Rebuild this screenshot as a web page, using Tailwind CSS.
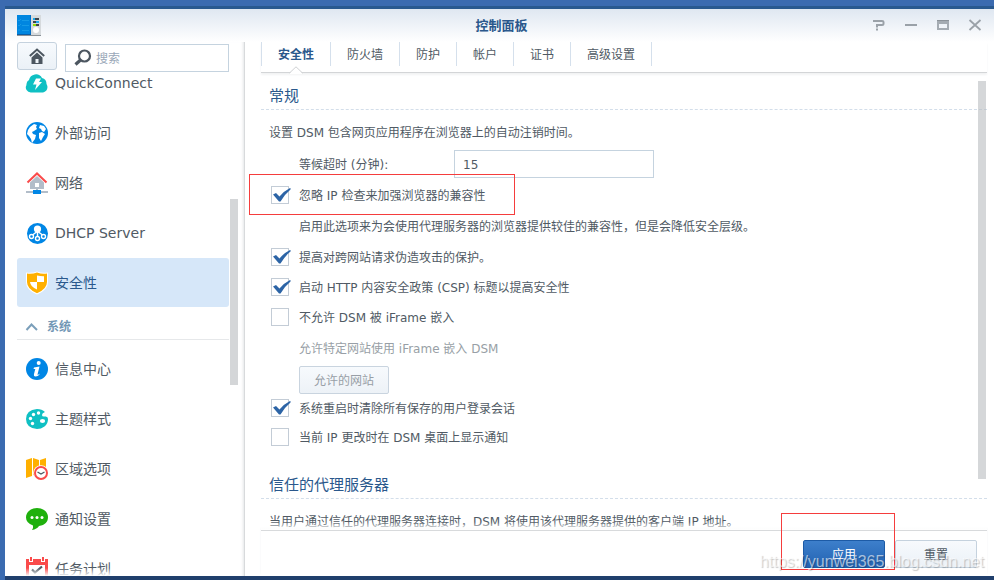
<!DOCTYPE html>
<html lang="zh-CN">
<head>
<meta charset="utf-8">
<meta name="viewport" content="width=device-width, initial-scale=1">
<title>控制面板</title>
<script src="https://cdn.jsdelivr.net/npm/@tailwindcss/browser@4"></script>
</head>
<body class="flex h-screen flex-col overflow-hidden bg-[#3b6bb0] font-['DejaVu_Sans','Noto_Sans_CJK_SC',sans-serif] text-xs text-[#505a64]">
<div class="ml-[5px] mt-1.5 h-[3px] shrink-0 bg-[#29598f]"></div>
<div class="relative ml-[5px] flex min-h-0 flex-1 flex-col bg-white">
  <header class="relative flex h-[33px] shrink-0 items-center justify-between bg-linear-to-b from-[#dfe7f1] to-white pl-3 pr-[11px]">
    <svg class="h-[22px] w-6" viewBox="0 0 24 22" aria-hidden="true">
      <rect x="0" y="0" width="14" height="20" fill="#0086e0"/><rect x="14" y="0" width="10" height="20" fill="#d6dadd"/>
      <path d="M0 19h14v1H0z" fill="#0a5ea8"/><path d="M0 20h24v1H0z" fill="#8b9298"/><path d="M13 0h1v19h-1z" fill="#0070c8"/>
      <path d="M1 5l1 1 2-2M1 10l1 1 2-2M1 15h2M5 5.500h7M5 10.500h7M5 15.500h7" fill="none" stroke="#1a9fe8" stroke-width=".8"/>
      <path d="M16 3h6v2h-6zM16 6h6v2h-6zM16 9h6v2h-6z" fill="#3c444c"/><path d="M16 3h2v2h-2zM19 6h3v2h-3z" fill="#19a9ee"/><path d="M16 9h3v2h-3z" fill="#8fdc00"/>
      <circle cx="19" cy="15" r="3" fill="#fff"/>
    </svg>
    <h1 class="absolute inset-x-0 h-8 pl-1 text-center text-[13px] leading-8 font-bold text-[#2a588c]">控制面板</h1>
    <div class="relative flex gap-4 pb-0.5">
      <button aria-label="帮助" class="size-4"><svg viewBox="0 0 16 16" fill="none" stroke="#9aa1a8" stroke-width="2"><path d="M2 4h9q1.500 0 1.500 1v1.500q0 1.500-1.500 1.500H6v2.500M5 12.500h2"/></svg></button>
      <button aria-label="最小化" class="size-4"><svg viewBox="0 0 16 16"><path d="M2 7h12v2H2z" fill="#9aa1a8"/></svg></button>
      <button aria-label="最大化" class="size-4"><svg viewBox="0 0 16 16"><path fill-rule="evenodd" d="M2 3h12v10H2zM4 7v4h8V7z" fill="#a4abb2"/><path d="M2 3h12v1H2z" fill="#8b9299"/></svg></button>
      <button aria-label="关闭" class="size-4"><svg viewBox="0 0 16 16"><path d="M2.500 3l11 10M13.500 3l-11 10" stroke="#9aa1a8" stroke-width="1.800"/></svg></button>
    </div>
  </header>

  <div class="flex min-h-0 flex-1">
    <aside class="relative flex w-60 shrink-0 flex-col border-r border-[#d8dadc] shadow-[inset_-3px_0_3px_-2px_#e4e6e8]">
      <div class="flex h-[30px] shrink-0 gap-2 pl-3">
        <button aria-label="主页" class="flex h-7 w-10 items-center justify-center rounded-[3px] border border-[#c5d2de] bg-linear-to-b from-[#f7fafd] to-[#ebf1f7]">
          <svg class="size-4" viewBox="0 0 16 16"><path d="M.8 8L8 1.500 15.200 8" fill="none" stroke="#4c5660" stroke-width="2"/><path fill-rule="evenodd" d="M8 4.500L2.500 9.500V16h11V9.500zM6.500 11h3v4h-3z" fill="#4c5660"/></svg>
        </button>
        <label class="mt-0.5 flex h-7 w-[164px] items-center gap-1 border border-[#c5d3df] px-2">
          <svg class="size-[18px] shrink-0" viewBox="0 0 18 18" fill="none" stroke="#4c5660"><circle cx="10.500" cy="7" r="5.500" stroke-width="2.200"/><path d="M6.500 11L1.500 15.500" stroke-width="3.200"/></svg>
          <input type="text" aria-label="搜索" placeholder="搜索" class="w-full min-w-0 pt-0.5 outline-none placeholder:text-[#9aa8b8]">
        </label>
      </div>
      <nav class="relative mr-[15px] min-h-0 flex-1 overflow-hidden pl-3 text-sm">
        <div class="-mt-3.5">
          <a href="#" class="flex h-[50px] items-center gap-1.5 pl-2">
            <svg class="size-6" viewBox="0 0 24 24"><path d="M6 21.500a5 5 0 0 1-4.500-7.500A5 5 0 0 1 4 9a7 7 0 0 1 13-2 6 6 0 0 1 4.500 6A5.500 5.500 0 0 1 18 21.500z" fill="#0fc0c3"/><path d="M11 7.500h5l-2 3.500h3l-7 8 1.500-5.500H8z" fill="#fff"/></svg>QuickConnect</a>
          <a href="#" class="flex h-[50px] items-center gap-1.5 pl-2">
            <svg class="size-6" viewBox="0 0 24 24"><circle cx="12" cy="12" r="11" fill="#0086e5"/><path d="M3 9l2-3 4-3 3 1-1 2 1 2-3 2-2 1 1 2 3 1-1 4-3 4-1-4-2-3-2-2zM15 4l4 1 2 3-2 3-2-1-1-2-2-1zM14 12l3-1 3 2-2 3-2 4-2-3z" fill="#fff"/></svg>外部访问</a>
          <a href="#" class="flex h-[50px] items-center gap-1.5 pl-2">
            <svg class="size-6" viewBox="0 0 24 24"><path fill-rule="evenodd" d="M12 5l-7 6.500V18h14v-6.500zM10 12h4v4h-4z" fill="#b2bdc9"/><path d="M11 18h2v2h-2zM1 20h22v2H1z" fill="#b2bdc9"/><path d="M8 19h8v4H8z" fill="#0086e5"/><path d="M2.500 11.500L12 2.500l9.500 9" fill="none" stroke="#fa4b4b" stroke-width="2"/></svg>网络</a>
          <a href="#" class="flex h-[50px] items-center gap-1.5 pl-2">
            <svg class="size-6" viewBox="0 0 24 24"><circle cx="12.500" cy="12.500" r="10.500" fill="#0086e5"/><circle cx="12.500" cy="8" r="3.600" fill="#fff"/><path d="M11.500 11L7.500 14M12.500 11v5M13.500 11l4 3" stroke="#fff" stroke-width="1.500"/><g fill="#0086e5" stroke="#fff" stroke-width="1.400"><circle cx="6.500" cy="15.500" r="2"/><circle cx="12.500" cy="17.500" r="2"/><circle cx="18.500" cy="15.500" r="2"/></g></svg>DHCP Server</a>
          <a href="#" aria-current="page" class="mb-px flex h-[49px] items-center gap-1.5 rounded-[3px] bg-[#d6e7f9] pl-2 text-[#2a588c]">
            <svg class="size-6" viewBox="0 0 24 24"><path d="M12 .5q5 2 11 1v9.500q0 8-11 12.500Q1 19 1 11V1.500q6 1 11-1z" fill="#fff"/><path d="M12 1.500q5 1.800 10 1v8.500q0 7-10 11.300Q2 18 2 11V2.500q5 .8 10-1z" fill="#ffb000"/><path d="M12 4.500q3.500.8 7 .7V11h-7zM5 11h7v7.500Q5.500 16 5 11z" fill="#fff"/></svg>安全性</a>
          <button class="flex h-8 w-full items-center gap-2 border-b border-[#e6e8ea] pl-2 pt-1.5 text-xs font-bold text-[#7297b5]">
            <svg class="size-3.5" viewBox="0 0 14 14" fill="none" stroke="#7b9fba" stroke-width="2"><path d="M1.500 10L6.500 4.500l5.500 5.500"/></svg>系统</button>
          <div class="pt-1">
          <a href="#" class="flex h-[50px] items-center gap-1.5 pl-2">
            <svg class="size-6" viewBox="0 0 24 24"><circle cx="12" cy="12" r="11" fill="#0086e5"/><circle cx="13.700" cy="6" r="2" fill="#fff"/><path d="M9 10.500l5.500-1-2 8q0 1 2.500-1-1.500 3-4.500 3-2 0-1.500-2.500l1.300-5H8.500z" fill="#fff"/></svg>信息中心</a>
          <a href="#" class="flex h-[50px] items-center gap-1.5 pl-2">
            <svg class="size-6" viewBox="0 0 24 24"><path d="M12 2q5 0 8 3-3 1-3 3 0 2 3 1.500 3-.5 3 2.500 0 5-3.500 7.500T12 22Q1 21 1 12T12 2z" fill="#0fc0c3"/><g fill="#fff"><circle cx="13.500" cy="6" r="1.700"/><circle cx="8.500" cy="7.500" r="1.700"/><circle cx="5.500" cy="11.500" r="1.700"/><circle cx="7.500" cy="16.500" r="1.700"/><ellipse cx="17.500" cy="14" rx="2.600" ry="2"/></g></svg>主题样式</a>
          <a href="#" class="flex h-[50px] items-center gap-1.5 pl-2">
            <svg class="size-6" viewBox="0 0 24 24"><path d="M1 3l6-2v18l-6 2zM8 1l6 2v16l-6-1zM15 3l6-2v18h-6z" fill="#ffb000"/><circle cx="16" cy="16" r="7.800" fill="#fff"/><circle cx="16" cy="16" r="6" fill="#fff" stroke="#fa4b4b" stroke-width="2"/><path d="M12.500 15l3.500 2 3.500-2" fill="none" stroke="#505a64" stroke-width="1.400"/></svg>区域选项</a>
          <a href="#" class="flex h-[50px] items-center gap-1.5 pl-2">
            <svg class="size-6" viewBox="0 0 24 24"><path d="M12 1c6 0 11 3.800 11 9s-3 8-9 9q-2 3-7 4 1.500-2 1-4.500Q1 16 1 10.500C1 5 6 1 12 1z" fill="#1fb00d"/><g fill="#fff"><circle cx="7" cy="10.500" r="1.500"/><circle cx="12" cy="10.500" r="1.500"/><circle cx="17" cy="10.500" r="1.500"/></g></svg>通知设置</a>
          <a href="#" class="flex h-[50px] items-center gap-1.5 pl-2">
            <svg class="size-6" viewBox="0 0 24 24"><path d="M1 2h22v21H1z" fill="#fa4b4b"/><path d="M4 8h16v12H4zM4 0h4v5H4zM16 0h4v5h-4z" fill="#fff"/><path d="M5 0h2v4H5zM17 0h2v4h-2z" fill="#fa4b4b"/><path d="M7 12.500l3 3 7-6" fill="none" stroke="#505a64" stroke-width="2.200"/></svg>任务计划</a>
          </div>
        </div>
        <div class="absolute inset-x-0 bottom-0 h-2 bg-linear-to-t from-white to-white/0"></div>
      </nav>
      <div class="absolute right-[6px] top-[157px] h-[186px] w-2 bg-[#d4d6d8]"></div>
    </aside>

    <main class="relative flex min-w-0 flex-1 flex-col pl-4 pr-[7px]">
      <nav class="relative flex h-[31px] shrink-0 border-b border-[#d3d5d7] shadow-[0_2px_2px_#f2f3f4]">
        <a href="#" aria-current="page" class="h-6 border-l border-[#d5e0ec] px-4 leading-[26px] font-bold text-[#2a588c]">安全性</a>
        <a href="#" class="h-6 border-l border-[#d5e0ec] px-4 leading-[26px]">防火墙</a>
        <a href="#" class="h-6 border-l border-[#d5e0ec] px-4 leading-[26px]">防护</a>
        <a href="#" class="h-6 border-l border-[#d5e0ec] px-4 leading-[26px]">帐户</a>
        <a href="#" class="h-6 border-l border-[#d5e0ec] px-4 leading-[26px]">证书</a>
        <a href="#" class="h-6 border-x border-[#d5e0ec] px-4 leading-[26px]">高级设置</a>
        <svg class="absolute left-7 -bottom-0.5 h-2 w-3.5" viewBox="0 0 14 8"><path d="M1 8V7l6-6 6 6v1z" fill="#fff"/><path d="M.5 7L7 .8 13.500 7" fill="none" stroke="#cfd1d3"/></svg>
      </nav>

      <form class="relative min-h-0 flex-1 overflow-hidden">
        <h2 class="mt-2 h-[29px] border-b border-dashed border-[#d3deea] pl-2 text-[15px] leading-[30px] text-[#2a588c]">常规</h2>
        <div class="pl-2">
          <p class="mt-2 h-7 leading-[30px]">设置 DSM 包含网页应用程序在浏览器上的自动注销时间。</p>
          <div class="mt-1 flex h-7 items-center pl-[30px]">
            <label for="timeout" class="w-[155px] pt-0.5">等候超时 (分钟):</label>
            <input id="timeout" type="text" value="15" class="h-7 w-[200px] border border-[#c5d3df] px-2 pt-0.5 outline-none">
          </div>
          <label class="mt-0.5 flex h-[30px] items-center gap-2.5">
            <span class="relative ml-0.5 size-[18px]"><input type="checkbox" checked class="peer block size-[18px] appearance-none border border-[#c3ccd6] bg-white"><svg class="pointer-events-none absolute left-0 top-0 hidden h-[18px] w-5 peer-checked:block" viewBox="0 0 20 18"><path d="M2 8.500L5 7l3.500 3.500Q13 5 19 2q1 0 .5 1.500Q14 8 9.500 15.500H8z" fill="#2c64a6"/></svg></span><span class="pt-0.5">忽略 IP 检查来加强浏览器的兼容性</span></label>
          <p class="h-8 pl-[30px] leading-[34px]">启用此选项来为会使用代理服务器的浏览器提供较佳的兼容性，但是会降低安全层级。</p>
          <label class="flex h-[30px] items-center gap-2.5">
            <span class="relative ml-0.5 size-[18px]"><input type="checkbox" checked class="peer block size-[18px] appearance-none border border-[#c3ccd6] bg-white"><svg class="pointer-events-none absolute left-0 top-0 hidden h-[18px] w-5 peer-checked:block" viewBox="0 0 20 18"><path d="M2 8.500L5 7l3.500 3.500Q13 5 19 2q1 0 .5 1.500Q14 8 9.500 15.500H8z" fill="#2c64a6"/></svg></span><span class="pt-0.5">提高对跨网站请求伪造攻击的保护。</span></label>
          <label class="flex h-[30px] items-center gap-2.5">
            <span class="relative ml-0.5 size-[18px]"><input type="checkbox" checked class="peer block size-[18px] appearance-none border border-[#c3ccd6] bg-white"><svg class="pointer-events-none absolute left-0 top-0 hidden h-[18px] w-5 peer-checked:block" viewBox="0 0 20 18"><path d="M2 8.500L5 7l3.500 3.500Q13 5 19 2q1 0 .5 1.500Q14 8 9.500 15.500H8z" fill="#2c64a6"/></svg></span><span class="pt-0.5">启动 HTTP 内容安全政策 (CSP) 标题以提高安全性</span></label>
          <label class="flex h-[30px] items-center gap-2.5">
            <span class="relative ml-0.5 size-[18px]"><input type="checkbox" class="peer block size-[18px] appearance-none border border-[#c3ccd6] bg-white"><svg class="pointer-events-none absolute left-0 top-0 hidden h-[18px] w-5 peer-checked:block" viewBox="0 0 20 18"><path d="M2 8.500L5 7l3.500 3.500Q13 5 19 2q1 0 .5 1.500Q14 8 9.500 15.500H8z" fill="#2c64a6"/></svg></span><span class="pt-0.5">不允许 DSM 被 iFrame 嵌入</span></label>
          <div class="flex flex-col items-start pl-[30px]">
            <p class="h-[34px] leading-[34px] text-[#989fa6]">允许特定网站使用 iFrame 嵌入 DSM</p>
            <button type="button" disabled class="h-7 w-[90px] rounded-[2px] border border-[#c9d4df] bg-linear-to-b from-[#f7fafd] to-[#edf2f7] pt-0.5 text-[#989fa6]">允许的网站</button>
          </div>
          <label class="flex h-7 items-center gap-2.5">
            <span class="relative ml-0.5 size-[18px]"><input type="checkbox" checked class="peer block size-[18px] appearance-none border border-[#c3ccd6] bg-white"><svg class="pointer-events-none absolute left-0 top-0 hidden h-[18px] w-5 peer-checked:block" viewBox="0 0 20 18"><path d="M2 8.500L5 7l3.500 3.500Q13 5 19 2q1 0 .5 1.500Q14 8 9.500 15.500H8z" fill="#2c64a6"/></svg></span><span class="pt-0.5">系统重启时清除所有保存的用户登录会话</span></label>
          <label class="flex h-[30px] items-center gap-2.5">
            <span class="relative ml-0.5 size-[18px]"><input type="checkbox" class="peer block size-[18px] appearance-none border border-[#c3ccd6] bg-white"><svg class="pointer-events-none absolute left-0 top-0 hidden h-[18px] w-5 peer-checked:block" viewBox="0 0 20 18"><path d="M2 8.500L5 7l3.500 3.500Q13 5 19 2q1 0 .5 1.500Q14 8 9.500 15.500H8z" fill="#2c64a6"/></svg></span><span class="pt-0.5">当前 IP 更改时在 DSM 桌面上显示通知</span></label>
        </div>
        <h2 class="mt-[18px] h-[29px] border-b border-dashed border-[#d3deea] pl-2 text-[15px] leading-[30px] text-[#2a588c]">信任的代理服务器</h2>
        <p class="mt-2 h-7 pl-2 leading-[30px]">当用户通过信任的代理服务器连接时，DSM 将使用该代理服务器提供的客户端 IP 地址。</p>
        <div class="absolute inset-x-0 bottom-0 h-2 bg-linear-to-t from-white to-white/0"></div>
        <div class="absolute right-px top-2 h-[398px] w-2 bg-[#b9bcbf]/60"></div>
      </form>

      <footer class="flex h-[46px] shrink-0 justify-end gap-2.5 border-t border-[#d8dadc] pr-2.5 pt-[9px] shadow-[0_-2px_2px_#f2f3f4]">
        <button class="h-7 w-[82px] rounded-[2px] border border-[#1d5ba6] bg-linear-to-b from-[#3d7fcb] to-[#2363b2] pt-0.5 text-white">应用</button>
        <button class="h-7 w-[82px] rounded-[2px] border border-[#c5d2de] bg-linear-to-b from-[#f7fafd] to-[#ebf1f7] pt-0.5">重置</button>
      </footer>

      <div class="pointer-events-none absolute left-1 top-[132px] h-[41px] w-[266px] border border-[#f53d3d]"></div>
      <div class="pointer-events-none absolute bottom-1.5 right-[99px] h-[57px] w-[114px] border border-[#f53d3d]"></div>
      <div class="pointer-events-none absolute bottom-1 right-2.5 font-['Liberation_Sans',sans-serif] text-base leading-5 whitespace-nowrap text-white/60 [text-shadow:1px_1px_1px_#00000038]">https://yunwei365.blog.csdn.net</div>
    </main>
  </div>
</div>
<div class="ml-[5px] h-1 shrink-0 bg-[#203f6c]"></div>
</body>
</html>
